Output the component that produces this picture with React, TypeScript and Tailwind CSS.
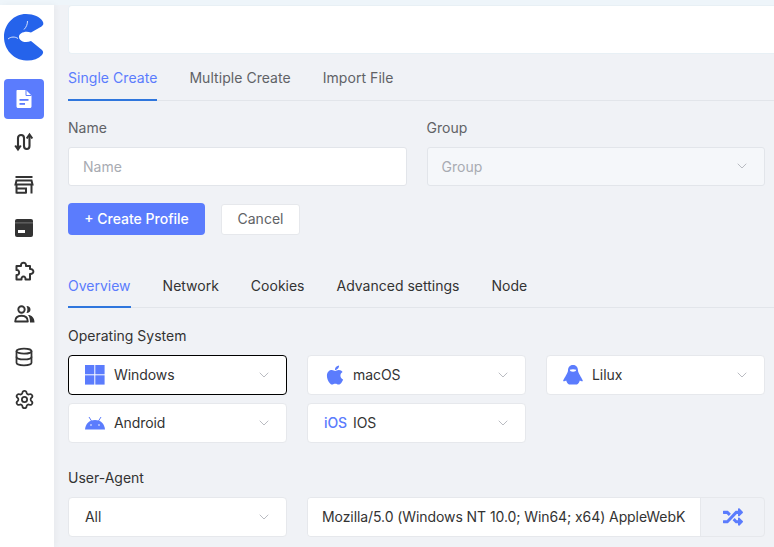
import React from 'react';
import { ChevronDown, Database, Settings } from 'lucide-react';
import { FaApple, FaRandom } from 'react-icons/fa';

const Logo = () => (
  <svg width="40" height="47" viewBox="0 0 40 47" className="block">
    <path
      d="M22 0C30 0 36 3 38.500 7C40 9.500 39.500 11 37.500 12.500L27 18.500C21 16.500 15 19 15 23C15 27 21 29.500 27 27L38 36C39.500 37.500 39.500 39 38 41C34 45 28 47 22 46.500C9 46 0 35 0 23C0 10 10 0 22 0Z"
      fill="#2563eb"
    />
    <path d="M23.500 7C23.500 10 22.500 13 20 15.500" stroke="#fff" strokeWidth="0.8" fill="none" />
    <path d="M4 25C7 22.500 11 22.500 14 24.500" stroke="#fff" strokeWidth="0.8" fill="none" />
  </svg>
);

const FileIcon = () => (
  <svg width="18" height="20" viewBox="0 0 18 20" fill="none">
    <path d="M2.500 1H11L16.500 6.500V17.500C16.500 18.300 15.800 19 15 19H3C2.200 19 1.500 18.300 1.500 17.500V2C1.500 1.400 1.900 1 2.500 1Z" fill="#fff" />
    <path d="M11 1V6.500H16.500" stroke="#5b7cfd" strokeWidth="1" />
    <rect x="4.500" y="10" width="9" height="1.800" fill="#5b7cfd" />
    <rect x="4.500" y="14" width="5.500" height="1.800" fill="#5b7cfd" />
  </svg>
);

const RouteIcon = () => (
  <svg width="20" height="20" viewBox="0 0 20 20" fill="none" stroke="#333" strokeWidth="2.100">
    <path d="M1.200 13.500L4 17.500L6.800 13.500" />
    <path d="M4 16V6C4 2 10 2 10 6V14C10 18 15.500 18 15.500 14V3" />
    <path d="M12.700 6.500L15.500 2.500L18.300 6.500" />
  </svg>
);

const StoreIcon = () => (
  <svg width="20" height="18" viewBox="0 0 20 18" fill="none" stroke="#333" strokeWidth="2">
    <path d="M1.500 1H18.500" />
    <path d="M2.500 4.500H17.500L18.500 8.500H1.500Z" />
    <path d="M2.500 8.500V17.500M17.500 8.500V17.500" />
    <path d="M2.500 12.500H12V17.500M2.500 16.800H12" />
  </svg>
);

const WindowIcon = () => (
  <svg width="18" height="18" viewBox="0 0 18 18">
    <rect x="0" y="0" width="18" height="18" rx="2" fill="#333" />
    <rect x="0" y="3.500" width="18" height="0.800" fill="#fff" opacity="0.4" />
    <rect x="3" y="11" width="7" height="3" fill="#fff" />
  </svg>
);

const PuzzleIcon = () => (
  <svg width="21" height="20" viewBox="0 0 21 20" fill="none" stroke="#333" strokeWidth="2" strokeLinejoin="round">
    <path d="M2.500 5H7C6.500 0.500 12.500 0.500 12 5H16V8C20.500 7.500 20.500 13.500 16 13V18.500H11.500C12 14.500 7 14.500 7.500 18.500H2.500V14C6 14.500 6 8.500 2.500 9Z" />
  </svg>
);

const UsersIcon = () => (
  <svg width="21" height="18" viewBox="0 0 21 18" fill="none">
    <circle cx="7.500" cy="4.500" r="3.200" stroke="#333" strokeWidth="1.900" />
    <path d="M1.200 16.500C1.200 12.500 4 10.800 7.500 10.800C11 10.800 13.800 12.500 13.800 16.500Z" stroke="#333" strokeWidth="1.900" strokeLinejoin="round" />
    <path d="M12.500 1C15 1 16.500 2.500 16.500 4.500C16.500 6.500 15 8 12.500 8C13.700 6 13.700 3 12.500 1Z" fill="#333" />
    <path d="M14 10C17.500 10 20.500 12.500 20.500 17.500H16C16 14 15.500 11.500 14 10Z" fill="#333" />
  </svg>
);

const WindowsLogo = () => (
  <svg width="20" height="20" viewBox="0 0 20 20" fill="#5b7cfd">
    <rect x="0" y="0" width="9.300" height="9.300" />
    <rect x="10.300" y="0" width="9.300" height="9.300" />
    <rect x="0" y="10.300" width="9.300" height="9.300" />
    <rect x="10.300" y="10.300" width="9.300" height="9.300" />
  </svg>
);

const AndroidLogo = () => (
  <svg width="20" height="14" viewBox="0 0 20 14" fill="#5b7cfd">
    <path d="M0 13.500C.5 8 4 4 10 4C16 4 19.500 8 20 13.500Z" />
    <path d="M4 1L6.500 5M16 1L13.500 5" stroke="#5b7cfd" strokeWidth="1" />
    <circle cx="6" cy="9" r="0.800" fill="#fff" />
    <circle cx="14" cy="9" r="0.800" fill="#fff" />
  </svg>
);

const PenguinLogo = () => (
  <svg width="20" height="20" viewBox="0 0 20 20" fill="#5b7cfd">
    <path d="M10 0C13.500 0 15 2.500 15 5.500C15 7 15.800 8 16.800 10C17.800 12 20 15 19.800 16C19.500 16.800 17.500 15.800 16.800 15.500C16.500 17 15.500 18.500 14 19.500H6C4.500 18.500 3.500 17 3.200 15.500C2.500 15.800 .5 16.800 .2 16C0 15 2.200 12 3.200 10C4.200 8 5 7 5 5.500C5 2.500 6.500 0 10 0Z" />
    <path d="M6.800 4.800C8.500 4 11.500 4 13.200 4.800C13.200 6 12 6.800 10 6.800C8 6.800 6.800 6 6.800 4.800Z" fill="#fff" />
  </svg>
);

const Field = ({ placeholder, chevron }: { placeholder: string; chevron?: boolean }) => (
  <div className={`h-[39px] rounded-[3px] border border-[#e2e5ea] flex items-center justify-between pl-[14px] pr-[14px] pb-[1px] text-[14px] text-[#a8abb2] ${chevron ? 'bg-[#f5f7fa]' : 'bg-white'}`}>
    {placeholder}
    {chevron && <ChevronDown size={16} strokeWidth={1.200} className="text-[#a8abb2]" />}
  </div>
);

const Select = ({ icon, label, active }: { icon?: React.ReactNode; label: string; active?: boolean }) => (
  <div className={`h-10 rounded-[4px] bg-white flex items-center pl-[16px] pr-[14px] pb-px text-[14px] tracking-[-0.08px] text-[#333] border ${active ? 'border-black' : 'border-[#e6e8ec]'}`}>
    {icon && <span className="w-[29px] flex items-center shrink-0">{icon}</span>}
    <span className="flex-1">{label}</span>
    <ChevronDown size={16} strokeWidth={1.200} className="text-[#a8abb2]" />
  </div>
);

const NavIcon = ({ children }: { children: React.ReactNode }) => (
  <div className="h-[43px] flex items-center justify-center">{children}</div>
);

export default function App() {
  return (
    <div className="w-[774px] h-[547px] overflow-hidden bg-[#f0f2f6] flex flex-col font-['Inter',sans-serif]">
      <div className="h-[5px] bg-[#eef5fa] shrink-0" />
      <div className="flex flex-1 min-h-0">
        <aside className="w-[54px] bg-white shrink-0 flex flex-col items-center pr-[6px] shadow-[2px_0_6px_rgba(0,0,0,0.04)]">
          <div className="mt-[9px] -ml-px"><Logo /></div>
          <div className="mt-[18px] mb-px w-10 h-10 rounded-[4px] bg-[#5b7cfd] flex items-center justify-center"><FileIcon /></div>
          <NavIcon><RouteIcon /></NavIcon>
          <NavIcon><StoreIcon /></NavIcon>
          <NavIcon><WindowIcon /></NavIcon>
          <NavIcon><PuzzleIcon /></NavIcon>
          <NavIcon><UsersIcon /></NavIcon>
          <NavIcon><Database size={20} strokeWidth={2.100} className="text-[#333]" /></NavIcon>
          <NavIcon><Settings size={21} strokeWidth={2} className="text-[#333]" /></NavIcon>
        </aside>
        <main className="flex-1 pl-[14px] min-w-0">
          <div className="h-[49px] bg-white rounded-l-[4px] border border-r-0 border-[#e8f0f5]" />
          <div className="h-[47px] flex items-end gap-8 border-b border-[#e2e5ea] text-[14px] tracking-[0.05px] text-[#606266]">
            <div className="h-[47px] flex items-center text-[#5b7cfd] border-b-2 border-[#2f76dd] -mb-px pt-[2px]">Single Create</div>
            <div className="h-[47px] flex items-center pt-[2px]">Multiple Create</div>
            <div className="h-[47px] flex items-center pt-[2px]">Import File</div>
          </div>
          <div className="grid grid-cols-2 gap-x-5 w-[697px] mt-[17px] text-[14px] text-[#606266]">
            <div>
              <div className="h-5 leading-5 mb-[9px]">Name</div>
              <Field placeholder="Name" />
            </div>
            <div>
              <div className="h-5 leading-5 mb-[9px]">Group</div>
              <Field placeholder="Group" chevron />
            </div>
          </div>
          <div className="flex items-center gap-4 mt-[17px]">
            <div className="w-[137px] h-8 rounded-[4px] bg-[#5b7cfd] text-white text-[14px] font-medium flex items-center justify-center pb-px">+ Create Profile</div>
            <div className="w-[79px] h-[31px] rounded-[3px] bg-white border border-[#e6e8ec] text-[14px] text-[#606266] flex items-center justify-center pb-px">Cancel</div>
          </div>
          <div className="mt-[30px] h-[43px] flex items-end gap-8 border-b border-[#e2e5ea] text-[14px] text-[#333]">
            <div className="h-[43px] flex items-center text-[#5b7cfd] border-b-2 border-[#2f76dd] -mb-px">Overview</div>
            <div className="h-[43px] flex items-center">Network</div>
            <div className="h-[43px] flex items-center">Cookies</div>
            <div className="h-[43px] flex items-center">Advanced settings</div>
            <div className="h-[43px] flex items-center">Node</div>
          </div>
          <div className="mt-[18px] h-5 leading-5 text-[14px] text-[#333]">Operating System</div>
          <div className="grid grid-cols-3 gap-x-5 gap-y-2 w-[697px] mt-[9px]">
            <Select active icon={<WindowsLogo />} label="Windows" />
            <Select icon={<FaApple size={22} className="text-[#5b7cfd]" />} label="macOS" />
            <Select icon={<PenguinLogo />} label="Lilux" />
            <Select icon={<AndroidLogo />} label="Android" />
            <Select icon={<span className="text-[14px] text-[#5b7cfd] font-medium">iOS</span>} label="IOS" />
          </div>
          <div className="mt-[25px] h-5 leading-5 text-[14px] text-[#333]">User-Agent</div>
          <div className="flex gap-5 w-[697px] mt-[9px]">
            <div className="w-[219px] shrink-0"><Select label="All" /></div>
            <div className="flex-1 h-10 flex rounded-[4px] border border-[#e6e8ec] overflow-hidden text-[14px] tracking-[-0.08px] text-[#333]">
              <div className="flex-1 bg-white flex items-center pl-[14px] pb-px whitespace-nowrap overflow-hidden">Mozilla/5.0 (Windows NT 10.0; Win64; x64) AppleWebK</div>
              <div className="w-[64px] shrink-0 border-l border-[#e6e8ec] flex items-center justify-center"><FaRandom size={20} className="text-[#5b7cfd]" /></div>
            </div>
          </div>
        </main>
      </div>
    </div>
  );
}
